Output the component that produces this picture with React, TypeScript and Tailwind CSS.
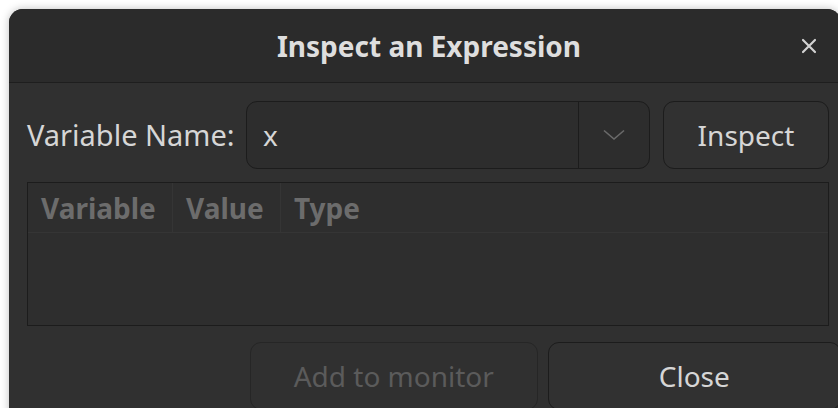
import React from "react";

const font = { fontFamily: '"Noto Sans", "Open Sans", sans-serif' };

const Chevron = () => (
  <svg width="22" height="12" viewBox="0 0 22 12" fill="none">
    <path d="M1 1.5 L11 10 L21 1.5" stroke="#6a6a6a" strokeWidth="1.6" />
  </svg>
);

const CloseIcon = () => (
  <svg width="16" height="16" viewBox="0 0 16 16" fill="none">
    <path d="M2 2 L14 14 M14 2 L2 14" stroke="#d2d2d2" strokeWidth="2.2" strokeLinecap="round" />
  </svg>
);

const columns = [
  { label: "Variable", width: "w-[145px]" },
  { label: "Value", width: "w-[108px]" },
  { label: "Type", width: "flex-1" },
];

export default function App() {
  return (
    <div
      className="w-[838px] h-[408px] overflow-hidden bg-white pt-[9px] pl-[9px]"
      style={font}
    >
      <div className="w-[832px] h-[420px] rounded-t-[14px] bg-[#303030] shadow-[0_0_8px_rgba(0,0,0,0.25)] flex flex-col overflow-hidden">
        {/* header bar */}
        <div className="relative h-[74px] shrink-0 bg-[#2b2b2b] border-b border-[#1e1e1e] flex items-center justify-center">
          <span className="text-[28px] font-bold text-[#dedede] pl-[8px]">
            Inspect an Expression
          </span>
          <button className="absolute right-[24px] top-[29px] flex items-center justify-center">
            <CloseIcon />
          </button>
        </div>

        <div className="flex flex-col pl-[18px] pt-[18px]">
          {/* name row */}
          <div className="flex items-center h-[68px]">
            <label className="text-[29px] text-[#d6d6d6] w-[219px] shrink-0">
              Variable Name:
            </label>
            <div className="flex h-[68px] w-[404px] rounded-[11px] border border-[#1c1c1c] bg-[#2d2d2d]">
              <div className="flex-1 flex items-center pl-[16px] text-[28px] text-[#d6d6d6] border-r border-[#1c1c1c]">
                x
              </div>
              <div className="w-[70px] flex items-center justify-center">
                <Chevron />
              </div>
            </div>
            <button className="ml-[13px] h-[68px] w-[166px] rounded-[11px] border border-[#1c1c1c] bg-[#313131] text-[28px] text-[#d6d6d6]">
              Inspect
            </button>
          </div>

          {/* results table */}
          <div className="mt-[13px] w-[802px] h-[144px] border border-[#1c1c1c] bg-[#2e2e2e] flex flex-col">
            <div className="flex h-[50px] border-b border-[#353535]">
              {columns.map((c, i) => (
                <div
                  key={c.label}
                  className={`${c.width} flex items-center pl-[13px] text-[28px] font-bold text-[#6c6c6c] ${
                    i < columns.length - 1 ? "border-r border-[#353535]" : ""
                  }`}
                >
                  {c.label}
                </div>
              ))}
            </div>
          </div>

          {/* dialog buttons */}
          <div className="flex mt-[16px] pl-[223px] gap-[10px]">
            <button
              disabled
              className="h-[68px] w-[290px] rounded-[11px] border border-[#262626] bg-[#303030] text-[28px] text-[#5b5b5b]"
            >
              Add to monitor
            </button>
            <button className="h-[68px] w-[296px] rounded-[11px] border border-[#1c1c1c] bg-[#313131] text-[28px] text-[#d6d6d6]">
              Close
            </button>
          </div>
        </div>
      </div>
    </div>
  );
}
